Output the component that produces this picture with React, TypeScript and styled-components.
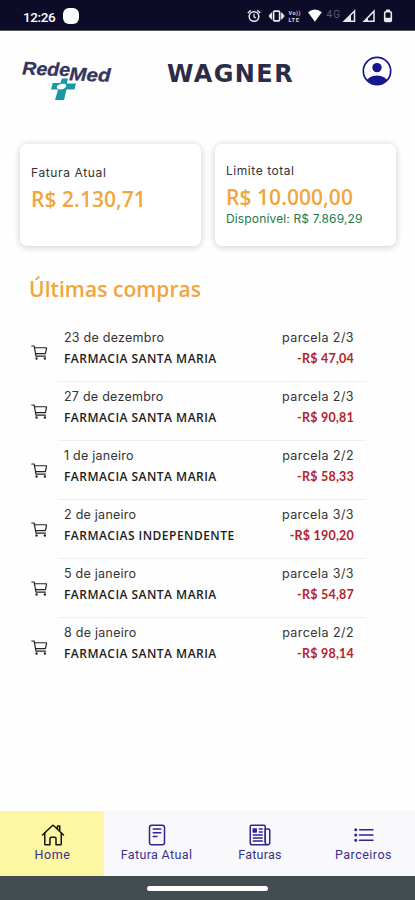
import React from 'react';
import styled, { createGlobalStyle } from 'styled-components';
import {
  IoCartOutline,
  IoHomeOutline,
  IoListOutline,
  IoNewspaperOutline,
  IoReaderOutline,
} from 'react-icons/io5';

const GlobalStyle = createGlobalStyle`
  *, *::before, *::after { box-sizing: border-box; }
  body { margin: 0; background: #fff; }
`;

const Screen = styled.div`
  display: flex;
  flex-direction: column;
  width: 415px;
  height: 900px;
  overflow: hidden;
  background: #fefefe;
  font-family: Inter, sans-serif;
  color: #333;
`;

const StatusBar = styled.div`
  display: flex;
  align-items: center;
  flex: none;
  height: 31px;
  padding: 3px 22px 0 23px;
  background: #0c0c28;
  border-bottom: 1px solid #55555f;
  color: #fff;
`;

const Clock = styled.span`
  width: 40px;
  font: 500 13.5px/16px Roboto, sans-serif;
  letter-spacing: -0.4px;
`;

const Notification = styled.span`
  width: 16px;
  height: 16px;
  margin-top: -2px;
  border-radius: 6px;
  background: #fff;
`;

const StatusIcons = styled.svg`
  display: block;
  margin-left: auto;
  margin-top: -1px;
`;

const Header = styled.header`
  display: grid;
  grid-template-columns: 146px 1fr 30px;
  align-items: start;
  flex: none;
  height: 113px;
  padding: 25px 23px 0 21px;
`;

const Logo = styled.svg`
  display: block;
  margin-top: 2px;
`;

const UserName = styled.h1`
  margin: 4px 0 0;
  font: 700 24px/28px 'DejaVu Sans', sans-serif;
  letter-spacing: 1.4px;
  color: #2c2c46;
`;

const Avatar = styled.svg`
  display: block;
`;

const Cards = styled.section`
  display: grid;
  grid-template-columns: 181px 181px;
  gap: 14px;
  flex: none;
  padding: 0 0 0 20px;
  height: 103px;
`;

const Card = styled.article<{ $top: number }>`
  display: flex;
  flex-direction: column;
  height: 102px;
  padding: ${({ $top }) => $top}px 0 0 11px;
  border-radius: 7px;
  background: #fff;
  box-shadow: 0 1px 7px rgba(0, 0, 0, 0.2);
  white-space: nowrap;
`;

const CardLabel = styled.span<{ $spacing: string }>`
  font-size: 12px;
  line-height: 17px;
  letter-spacing: ${({ $spacing }) => $spacing};
`;

const Amount = styled.strong`
  margin-top: 4px;
  font: 600 21px/28px 'Open Sans', sans-serif;
  letter-spacing: 0.05px;
  color: #f0a63c;
`;

const Available = styled.span`
  margin-top: -1px;
  font-size: 12px;
  line-height: 17px;
  letter-spacing: 0.15px;
  color: #25784a;
`;

const SectionTitle = styled.h2`
  flex: none;
  margin: 28px 0 0 29px;
  font: 600 21px/28px 'Open Sans', sans-serif;
  letter-spacing: 0.05px;
  color: #f0a63c;
`;

const Purchases = styled.ul`
  flex: 1;
  margin: 0;
  padding: 20px 49px 0 30px;
  list-style: none;
`;

const Purchase = styled.li`
  display: grid;
  grid-template-columns: 28px 1fr;
  height: 59px;
`;

const CartIcon = styled(IoCartOutline)`
  width: 19px;
  height: 19px;
  margin-top: 20px;
  color: #222;
`;

const PurchaseBody = styled.div<{ $last: boolean }>`
  display: grid;
  grid-template-columns: 1fr auto;
  grid-template-rows: 20px 20px;
  align-content: start;
  padding: 5px 12px 0 6px;
  border-bottom: 1px solid ${({ $last }) => ($last ? 'transparent' : '#efefef')};
  white-space: nowrap;
`;

const PurchaseDate = styled.span`
  font-size: 12.5px;
  line-height: 20px;
  letter-spacing: 0.25px;
`;

const Installment = styled.span`
  font-size: 12.5px;
  line-height: 20px;
  letter-spacing: 0.44px;
  text-align: right;
`;

const Merchant = styled.span`
  font: 600 12px/22px 'Open Sans', sans-serif;
  letter-spacing: 0.47px;
  color: #1c1c1c;
`;

const Value = styled.span`
  font: 700 12.5px/22px Lato, sans-serif;
  letter-spacing: 0.22px;
  text-align: right;
  color: #b3232b;
`;

const TabBar = styled.nav`
  display: grid;
  grid-template-columns: 104px 104px 103px 104px;
  flex: none;
  height: 65px;
  background: #f9f9fb;
`;

const Tab = styled.a<{ $active?: boolean; $spacing: string }>`
  display: flex;
  flex-direction: column;
  align-items: center;
  padding: 12px 0 0 1px;
  background: ${({ $active }) => ($active ? '#fdf6a2' : 'transparent')};
  color: #37308c;
  font: 400 12.5px/16px Roboto, sans-serif;
  letter-spacing: ${({ $spacing }) => $spacing};

  svg {
    width: 24px;
    height: 24px;
    color: ${({ $active }) => ($active ? '#16160c' : '#2e2590')};
  }
`;

const SystemBar = styled.div`
  display: flex;
  justify-content: center;
  flex: none;
  height: 24px;
  padding-top: 10px;
  background: #434c50;
`;

const HomeHandle = styled.span`
  width: 121px;
  height: 5px;
  border-radius: 3px;
  background: #fff;
`;

const purchases = [
  { date: '23 de dezembro', merchant: 'FARMACIA SANTA MARIA', part: 'parcela 2/3', value: '-R$ 47,04' },
  { date: '27 de dezembro', merchant: 'FARMACIA SANTA MARIA', part: 'parcela 2/3', value: '-R$ 90,81' },
  { date: '1 de janeiro', merchant: 'FARMACIA SANTA MARIA', part: 'parcela 2/2', value: '-R$ 58,33' },
  { date: '2 de janeiro', merchant: 'FARMACIAS INDEPENDENTE', part: 'parcela 3/3', value: '-R$ 190,20' },
  { date: '5 de janeiro', merchant: 'FARMACIA SANTA MARIA', part: 'parcela 3/3', value: '-R$ 54,87' },
  { date: '8 de janeiro', merchant: 'FARMACIA SANTA MARIA', part: 'parcela 2/2', value: '-R$ 98,14' },
];

function SystemStatus() {
  return (
    <StatusIcons width="147" height="18" viewBox="246 7 147 18" fill="none" stroke="#e8e8ee">
      <circle cx="254" cy="16.5" r="4.8" strokeWidth="1.5" />
      <path d="M247.8 13l3-2.8M260.2 13l-3-2.8M254 13.8v3l2 1.2" strokeWidth="1.3" />
      <rect x="273.6" y="11.2" width="6" height="9.6" rx="1" strokeWidth="1.7" />
      <path d="M271.6 12.8l-2.6 3.2 2.6 3.2zM281.6 12.8l2.6 3.2-2.6 3.2z" fill="#e8e8ee" strokeWidth="1" />
      <g fill="#d5d5de" stroke="none" fontFamily="Roboto, sans-serif" fontWeight="700">
        <text x="288.5" y="14.5" fontSize="5.5" textLength="12">Vo))</text>
        <text x="288.5" y="21.5" fontSize="5.8" textLength="10.5">LTE</text>
        <text x="326.5" y="17.5" fontSize="10" fontWeight="400" fill="#5c5c72" textLength="13.5">4G</text>
      </g>
      <path d="M308 12.3Q314.8 6.8 321.8 12.3L314.9 21.8z" fill="#fff" stroke="none" />
      <path d="M344.2 21.2h10.3V11z" strokeWidth="1.5" />
      <path d="M344 21.8h7v-7z" fill="#e8e8ee" stroke="none" />
      <path d="M364.2 21.2h9.8V11.2z" strokeWidth="1.5" />
      <path d="M364 21.8h4v-4z" fill="#e8e8ee" stroke="none" />
      <rect x="384.7" y="11.8" width="6.6" height="9.6" rx="1" strokeWidth="1.6" />
      <path d="M386 9.5h4v2h-4zM385 17.8h6v3.5h-6z" fill="#e8e8ee" stroke="none" />
    </StatusIcons>
  );
}

function RedeMedLogo() {
  return (
    <Logo width="94" height="46" viewBox="0 0 94 46" role="img" aria-label="Rede Med">
      <g fontFamily="Liberation Sans, Arial, sans-serif" fontStyle="italic" fontWeight="700" fill="#35345c" stroke="#35345c" strokeWidth="0.3">
        <text transform="rotate(2 1 17)" x="1" y="16.5" fontSize="18.5" textLength="48" lengthAdjust="spacingAndGlyphs">Rede</text>
        <text transform="rotate(2 48 22)" x="48" y="22.3" fontSize="18.5" textLength="41.5" lengthAdjust="spacingAndGlyphs">Med</text>
      </g>
      <path d="M41 20.5h6l-1.2 5H55l-1.5 6h-8L43 42H34l3-10.5H30l1.8-6.5h7.500z" fill="#159aa3" />
      <ellipse cx="40.5" cy="28.6" rx="4.8" ry="2.7" fill="#fff" transform="rotate(-15 40.5 28.6)" />
    </Logo>
  );
}

function UserAvatar() {
  return (
    <Avatar width="30" height="30" viewBox="0 0 30 30">
      <clipPath id="avatar-disc">
        <circle cx="15" cy="15" r="13.5" />
      </clipPath>
      <circle cx="15" cy="11.6" r="4.7" fill="#16168f" />
      <ellipse cx="15" cy="26" rx="10.5" ry="6.5" fill="#16168f" clipPath="url(#avatar-disc)" />
      <circle cx="15" cy="15" r="13.7" fill="none" stroke="#16168f" strokeWidth="1.7" />
    </Avatar>
  );
}

export default function App() {
  return (
    <Screen>
      <GlobalStyle />
      <StatusBar>
        <Clock>12:26</Clock>
        <Notification />
        <SystemStatus />
      </StatusBar>
      <Header>
        <RedeMedLogo />
        <UserName>WAGNER</UserName>
        <UserAvatar />
      </Header>
      <Cards>
        <Card $top={19.5}>
          <CardLabel $spacing="0.63px">Fatura Atual</CardLabel>
          <Amount>R$ 2.130,71</Amount>
        </Card>
        <Card $top={17.5}>
          <CardLabel $spacing="0.55px">Limite total</CardLabel>
          <Amount>R$ 10.000,00</Amount>
          <Available>Disponível: R$ 7.869,29</Available>
        </Card>
      </Cards>
      <SectionTitle>Últimas compras</SectionTitle>
      <Purchases>
        {purchases.map((item, index) => (
          <Purchase key={item.date}>
            <CartIcon />
            <PurchaseBody $last={index === purchases.length - 1}>
              <PurchaseDate>{item.date}</PurchaseDate>
              <Installment>{item.part}</Installment>
              <Merchant>{item.merchant}</Merchant>
              <Value>{item.value}</Value>
            </PurchaseBody>
          </Purchase>
        ))}
      </Purchases>
      <TabBar>
        <Tab $active $spacing="0.6px">
          <IoHomeOutline />
          Home
        </Tab>
        <Tab $spacing="0.36px">
          <IoReaderOutline />
          Fatura Atual
        </Tab>
        <Tab $spacing="0.25px">
          <IoNewspaperOutline />
          Faturas
        </Tab>
        <Tab $spacing="0.48px">
          <IoListOutline />
          Parceiros
        </Tab>
      </TabBar>
      <SystemBar>
        <HomeHandle />
      </SystemBar>
    </Screen>
  );
}
